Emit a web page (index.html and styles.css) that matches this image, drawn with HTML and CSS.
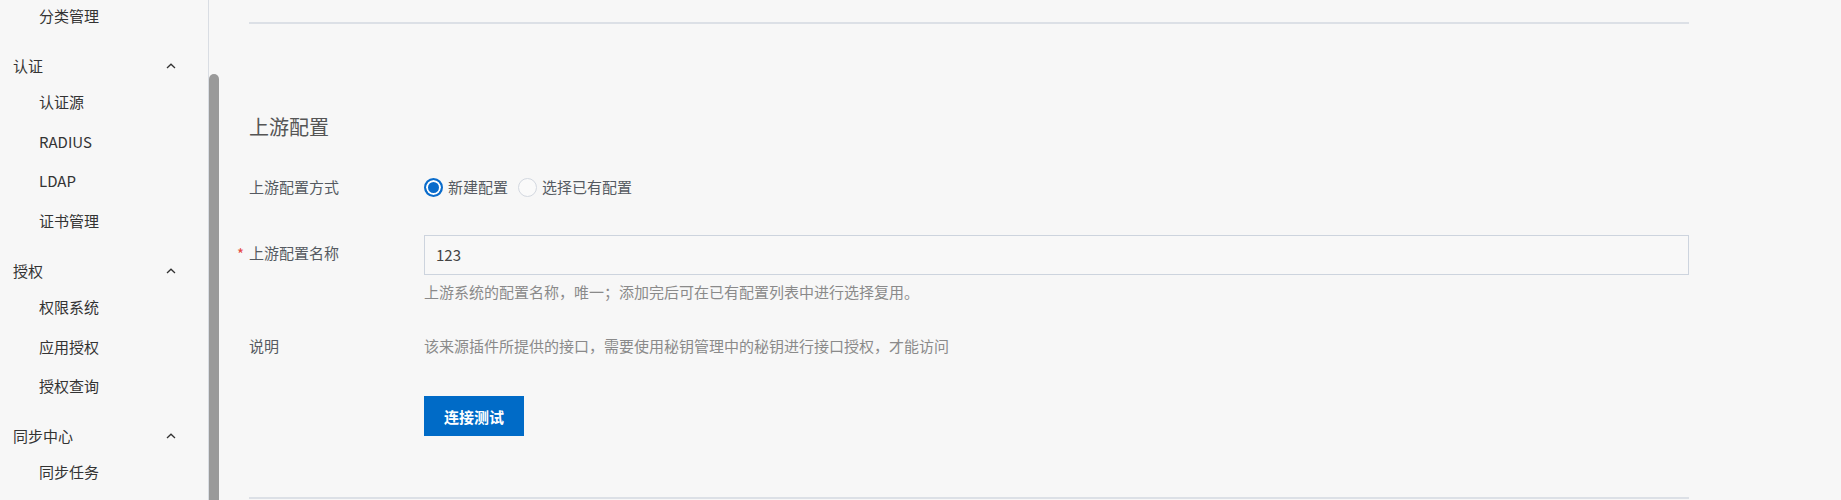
FILE: index.html
```html
<!DOCTYPE html>
<html lang="zh-CN">
<head>
<meta charset="utf-8">
<title>上游配置</title>
<link rel="stylesheet" href="styles.css">
</head>
<body>
<div class="app">
  <aside class="sidebar">
    <ul class="menu">
      <li class="group">
        <a class="item">分类管理</a>
      </li>
      <li class="group">
        <div class="group-head"><span>认证</span><svg class="chev" width="10" height="6" viewBox="0 0 10 6"><polyline points="1,5 5,1.2 9,5" fill="none" stroke="#333" stroke-width="1.3"/></svg></div>
        <a class="item">认证源</a>
        <a class="item">RADIUS</a>
        <a class="item">LDAP</a>
        <a class="item">证书管理</a>
      </li>
      <li class="group">
        <div class="group-head"><span>授权</span><svg class="chev" width="10" height="6" viewBox="0 0 10 6"><polyline points="1,5 5,1.2 9,5" fill="none" stroke="#333" stroke-width="1.3"/></svg></div>
        <a class="item">权限系统</a>
        <a class="item">应用授权</a>
        <a class="item">授权查询</a>
      </li>
      <li class="group">
        <div class="group-head"><span>同步中心</span><svg class="chev" width="10" height="6" viewBox="0 0 10 6"><polyline points="1,5 5,1.2 9,5" fill="none" stroke="#333" stroke-width="1.3"/></svg></div>
        <a class="item">同步任务</a>
      </li>
    </ul>
  </aside>
  <div class="scrollbar"><div class="thumb"></div></div>
  <main class="main">
    <div class="content">
      <hr class="divider">
      <h2 class="section-title">上游配置</h2>
      <div class="form-row row-radio">
        <label class="form-label">上游配置方式</label>
        <div class="form-control radios">
          <label class="radio"><span class="radio-dot checked"></span><span class="radio-text">新建配置</span></label>
          <label class="radio"><span class="radio-dot"></span><span class="radio-text">选择已有配置</span></label>
        </div>
      </div>
      <div class="form-row row-name">
        <label class="form-label"><span class="req">*</span>上游配置名称</label>
        <div class="form-control">
          <div class="input">123</div>
          <div class="help">上游系统的配置名称，唯一；添加完后可在已有配置列表中进行选择复用。</div>
        </div>
      </div>
      <div class="form-row row-desc">
        <label class="form-label">说明</label>
        <div class="form-control desc">该来源插件所提供的接口，需要使用秘钥管理中的秘钥进行接口授权，才能访问</div>
      </div>
      <div class="form-row row-btn">
        <div class="form-label"></div>
        <div class="form-control"><button class="btn-primary" type="button">连接测试</button></div>
      </div>
      <hr class="divider bottom">
    </div>
  </main>
</div>
</body>
</html>
```

FILE: styles.css
```css
* { box-sizing: border-box; }
html, body { margin: 0; padding: 0; }
body {
  background: #f7f7f7;
  font-family: "Noto Sans CJK SC", "Microsoft YaHei", "Noto Sans", sans-serif;
  font-size: 15px;
  color: #333;
  height: 500px;
  overflow: hidden;
}
.app {
  display: flex;
  height: 500px;
  overflow: hidden;
}
.sidebar {
  width: 209px;
  flex: 0 0 209px;
  border-right: 1px solid #d9dde3;
  background: #f7f7f7;
  overflow: hidden;
}
.menu {
  list-style: none;
  margin: -4px 0 0;
  padding: 0;
}
.group { margin-bottom: 14px; }
.group-head {
  height: 32.4px;
  display: flex;
  align-items: center;
  justify-content: space-between;
  padding: 0 32px 0 13px;
  color: #333;
}
.chev { display: block; margin-top: 0; }
.item {
  display: flex;
  align-items: center;
  height: 39.6px;
  padding-left: 39px;
  color: #333;
}
.scrollbar {
  width: 11px;
  flex: 0 0 11px;
  display: flex;
  flex-direction: column;
  padding: 74px 1px 0 0;
}
.thumb {
  flex: 1;
  background: #9a9a9a;
  border-radius: 5px 5px 0 0;
  margin-bottom: -10px;
}
.main {
  flex: 1;
  padding: 22px 0 0 29px;
}
.content { width: 1440px; }
.divider {
  margin: 0;
  border: 0;
  height: 2px;
  background: #dce0e6;
}
.divider.bottom { margin-top: 61px; }
.section-title {
  margin: 89px 0 0;
  font-size: 20px;
  line-height: 28px;
  font-weight: normal;
  color: #555;
}
.form-row {
  display: flex;
  align-items: flex-start;
}
.form-label {
  flex: 0 0 175px;
  width: 175px;
  line-height: 20px;
  color: #555a61;
  position: relative;
}
.form-control { flex: 1; line-height: 20px; }
.row-radio { margin-top: 36px; }
.radios { display: flex; align-items: center; }
.radio {
  display: inline-flex;
  align-items: center;
  margin-right: 10px;
  color: #555a61;
}
.radio-dot {
  width: 19px;
  height: 19px;
  border-radius: 50%;
  border: 1px solid #d3d8e0;
  background: #fafafa;
  margin-right: 5px;
}
.radio-dot.checked {
  border: 2px solid #0a6ccb;
  background: #0a6ccb;
  box-shadow: inset 0 0 0 2px #fff;
}
.row-name { margin-top: 38px; }
.row-name .form-label { padding-top: 8px; }
.req {
  position: absolute;
  left: -12px;
  top: 9px;
  color: #e5483f;
  font-size: 15px;
}
.input {
  height: 40px;
  border: 1px solid #cdd4de;
  background: #f8f8f8;
  padding: 0 11px;
  display: flex;
  align-items: center;
  color: #444;
}
.help {
  margin-top: 7px;
  color: #8a8a8a;
}
.row-desc { margin-top: 34px; }
.desc { color: #8a8a8a; }
.row-btn { margin-top: 40px; }
.btn-primary {
  width: 100px;
  height: 40px;
  border: 0;
  background: #006bc7;
  color: #fff;
  font-family: inherit;
  font-size: 15px;
  font-weight: bold;
  padding: 0;
}
```
